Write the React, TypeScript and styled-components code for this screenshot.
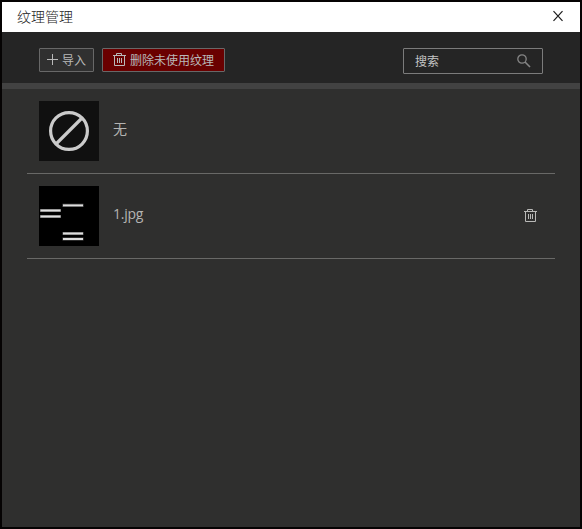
import React from "react";
import styled, { createGlobalStyle } from "styled-components";

const GlobalStyle = createGlobalStyle`
  * { box-sizing: border-box; }
  html, body { margin: 0; padding: 0; background: #050303; overflow: hidden; }
  body, button, input { font-family: "Noto Sans CJK SC", "Open Sans", sans-serif; }
`;

const Backdrop = styled.main`
  width: 582px;
  height: 529px;
  padding: 2px;
  background: #050303;
`;

const Dialog = styled.section`
  display: flex;
  flex-direction: column;
  height: 525px;
  width: 578px;
  background: #2f2f2e;
`;

const TitleBar = styled.header`
  display: flex;
  align-items: center;
  justify-content: space-between;
  flex: none;
  height: 30px;
  padding: 0 16px 0 15px;
  background: #fff;
`;

const Title = styled.h1`
  margin: 0;
  padding-bottom: 2px;
  font-size: 14px;
  font-weight: 300;
  line-height: 20px;
  color: #222;
`;

const CloseButton = styled.button`
  display: flex;
  padding: 0 0 2px;
  border: 0;
  background: none;
  color: #1c1c1c;
`;

const Toolbar = styled.div`
  display: flex;
  align-items: flex-start;
  gap: 8px;
  flex: none;
  height: 57px;
  padding: 16px 37px 0;
  background: #252525;
  border-bottom: 6px solid #424242;
`;

const ToolButton = styled.button<{ $danger?: boolean }>`
  display: flex;
  align-items: center;
  gap: 3px;
  width: ${(p) => (p.$danger ? 123 : 55)}px;
  height: 24px;
  padding: 0 0 0 ${(p) => (p.$danger ? 10 : 7)}px;
  border: 1px solid #686868;
  border-radius: 1px;
  background: ${(p) => (p.$danger ? "#6a0000" : "#303030")};
  color: #b9b9b9;
  font-size: 12px;
  line-height: 20px;
  white-space: nowrap;
`;

const SearchBox = styled.label`
  display: flex;
  align-items: center;
  width: 140px;
  height: 26px;
  margin-left: auto;
  padding: 0 11px 0 11px;
  border: 1px solid #7c7c7c;
  border-radius: 1px;
  color: #858585;
`;

const SearchInput = styled.input`
  flex: 1;
  min-width: 0;
  padding: 0;
  border: 0;
  outline: 0;
  background: none;
  font-size: 12px;
  line-height: 20px;
  color: #ccc;
  &::placeholder { color: #c4c4c4; opacity: 1; }
`;

const TextureList = styled.ul`
  margin: 0;
  padding: 0 25px;
  list-style: none;
`;

const TextureRow = styled.li`
  display: flex;
  align-items: center;
  height: 85px;
  padding: 0 17px 0 12px;
  border-bottom: 1px solid #696967;
  color: #b4b4b2;
`;

const Thumbnail = styled.div<{ $color: string }>`
  width: 60px;
  height: 60px;
  margin-right: 14px;
  background: ${(p) => p.$color};
  svg { display: block; }
`;

const TextureName = styled.span<{ $latin?: boolean }>`
  flex: 1;
  padding-bottom: ${(p) => (p.$latin ? 4 : 6)}px;
  font-family: ${(p) => (p.$latin ? '"Open Sans"' : '"Noto Sans CJK SC"')}, sans-serif;
  font-size: 14px;
  line-height: 20px;
  letter-spacing: ${(p) => (p.$latin ? "-0.25px" : "0")};
`;

const IconButton = styled.button`
  display: flex;
  padding: 0;
  border: 0;
  background: none;
  color: #b9b9b7;
`;

const TrashIcon = () => (
  <svg width="14" height="14" viewBox="0 0 14 14" fill="none" stroke="currentColor">
    <path d="M0 2.5h13M3.5 2V.5h5V2M1.5 3v9.5h10V3M4.5 5v5M6.5 5v5M8.5 5v5" />
  </svg>
);

const PlusIcon = () => (
  <svg width="12" height="12" viewBox="0 0 12 12" fill="none" stroke="currentColor">
    <path d="M0 5.5h11M5.5 0v11" />
  </svg>
);

const SearchIcon = () => (
  <svg width="14" height="14" viewBox="0 0 14 14" fill="none" stroke="currentColor">
    <circle cx="5" cy="5" r="4.2" strokeWidth="1.3" />
    <path d="M8 8l5 5" strokeWidth="1.6" />
  </svg>
);

const CloseIcon = () => (
  <svg width="12" height="12" viewBox="0 0 12 12" fill="none" stroke="currentColor" strokeWidth="1.2">
    <path d="M1.5 1.2l9 9.6M10.5 1.2l-9 9.6" />
  </svg>
);

const EmptyTexture = () => (
  <svg width="60" height="60" viewBox="0 0 60 60" fill="none" stroke="#cbcbcb" strokeWidth="3.2">
    <circle cx="30" cy="30" r="18.4" />
    <path d="M17 43L43 17" />
  </svg>
);

const StripeTexture = () => (
  <svg width="60" height="60" viewBox="0 0 60 60" fill="none">
    <path d="M1 24.5h21M1 30.5h21M23.5 19.3h21M23.5 47.5h21M23.5 53h21" stroke="#555" strokeWidth="3.2" />
    <path d="M1.5 24.5h20M1.5 30.5h20M24 19.3h20M24 47.5h20M24 53h20" stroke="#dedede" strokeWidth="1.8" />
  </svg>
);

export default function App() {
  return (
    <>
      <GlobalStyle />
      <Backdrop>
        <Dialog>
          <TitleBar>
            <Title>纹理管理</Title>
            <CloseButton aria-label="关闭"><CloseIcon /></CloseButton>
          </TitleBar>
          <Toolbar>
            <ToolButton><PlusIcon />导入</ToolButton>
            <ToolButton $danger><TrashIcon />删除未使用纹理</ToolButton>
            <SearchBox>
              <SearchInput placeholder="搜索" />
              <SearchIcon />
            </SearchBox>
          </Toolbar>
          <TextureList>
            <TextureRow>
              <Thumbnail $color="#101010"><EmptyTexture /></Thumbnail>
              <TextureName>无</TextureName>
            </TextureRow>
            <TextureRow>
              <Thumbnail $color="#000"><StripeTexture /></Thumbnail>
              <TextureName $latin>1.jpg</TextureName>
              <IconButton aria-label="删除"><TrashIcon /></IconButton>
            </TextureRow>
          </TextureList>
        </Dialog>
      </Backdrop>
    </>
  );
}
